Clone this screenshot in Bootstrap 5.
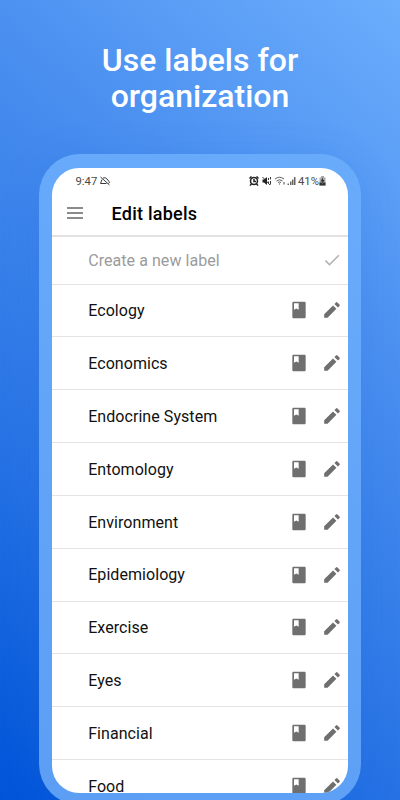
<!DOCTYPE html>
<html lang="en">
<head>
<meta charset="utf-8">
<meta name="viewport" content="width=device-width, initial-scale=1">
<title>Edit labels</title>
<link href="https://cdn.jsdelivr.net/npm/bootstrap@5.3.0/dist/css/bootstrap.min.css" rel="stylesheet">
<style>
body{font-family:Roboto,"Liberation Sans",sans-serif;height:800px;background:linear-gradient(221deg,#6baefd 0%,#4b90f0 32%,#2874e5 68%,#0054d8 100%);color:#111}
.promo{height:154px;padding-top:42px;font-size:32px;line-height:36px;font-weight:500;letter-spacing:0}
.phone{width:322px;height:651px;border-radius:41px;padding:13.5px 13px 12.5px;background:linear-gradient(200deg,#69abfb,#5b9ef4);box-shadow:0 4px 40px rgba(20,95,220,.13)}
.screen{height:625px;border-radius:27px}
.status{height:27px;padding:0 22px 0 23.500px;font-size:11.300px;line-height:27px;color:#4a4a4a}
.appbar{height:42px;padding:0 15px;border-bottom:2px solid #e2e2e2}
.appbar h1{font-size:18px;letter-spacing:.25px;margin-left:28.500px;padding-bottom:2px;color:#000}
.appbar svg{margin-bottom:4px}
.label-row{height:52.85px;padding:0 6.500px 0 36.200px;border-bottom:1.500px solid #e4e4e4;font-size:16px;letter-spacing:.06px;flex-shrink:0}
.label-row>span{padding-top:1.600px}
.label-row.new-label{height:48px;color:#9b9b9b}
.label-row svg{fill:#6f6f6f}
.label-row.new-label svg{fill:#b4b4b4}
.edit-icon{margin-left:13px}
.battery-level{margin-left:2px}
</style>
<script src="https://cdn.jsdelivr.net/npm/bootstrap@5.3.0/dist/js/bootstrap.bundle.min.js"></script>
</head>
<body class="overflow-hidden">
<svg class="d-none">
<symbol id="book" viewBox="0 0 24 24"><path d="M18.500 2h-13C4.600 2 4 2.600 4 3.500v17c0 .9.600 1.500 1.500 1.500h13c.9 0 1.500-.600 1.500-1.500v-17c0-.9-.600-1.500-1.500-1.500zM6 3.800h5.600v8l-2.800-1.700L6 11.800z"/></symbol>
<symbol id="pencil" viewBox="0 0 24 24"><path d="M2.600 17.100V21.200h4.100L17.300 10.600l-4.100-4.100zM21 7.100a1.200 1.200 0 0 0 0-1.700L18.500 2.900a1.200 1.200 0 0 0-1.700 0l-1.900 1.900 4.200 4.200z"/></symbol>
</svg>
<h2 class="promo text-white text-center mb-0">Use labels for<br>organization</h2>
<main class="phone mx-auto">
<div class="screen bg-white overflow-hidden d-flex flex-column">
<div class="status d-flex align-items-center flex-shrink-0">
<span>9:47</span>
<svg style="margin-left:3px" width="10" height="10" viewBox="0 0 20 20" fill="none" stroke="#333" stroke-width="1.900"><path d="M1 2l18 16M6 4q5-2 8 2l4 5q2 3-1 4M4 7L1 15h12"/></svg>
<span class="ms-auto d-flex align-items-center">
<svg width="10" height="10" viewBox="0 0 20 20" fill="none" stroke="#222" stroke-width="3"><circle cx="10" cy="10" r="7"/><path d="M10 6v5h4M1 5l4-4M19 5l-4-4M5 16l-3 3M15 16l3 3"/></svg>
<svg style="margin-left:3px" width="9" height="10" viewBox="0 0 18 20" fill="#222"><path d="M1 7h3l6-5v16l-6-5H1z"/><path d="M1 2l15 16M13 4v4M13 11v3M17 2v5M17 10v7" stroke="#222" stroke-width="1.800"/></svg>
<svg style="margin-left:3px" width="12" height="10" viewBox="0 0 22 20" fill="none" stroke="#444" stroke-width="1.700"><path d="M1 6q9-7 18 0M4 10q6-5 12 0M7 13q3-2 6 0"/><path d="M10 15v2M19 12v5" stroke-width="2"/></svg>
<svg width="10" height="10" viewBox="0 0 20 20" fill="#666"><path d="M3 15h3v3H3zM8 11h3v7H8zM12 7h3v11h-3zM16 2h3v16h-3z"/></svg>
<span class="battery-level">41%</span>
<svg width="7" height="10" viewBox="0 0 14 20" fill="#333"><path d="M4 0h6v3h3v16H1V3h3z" fill="#aaa"/><path d="M1 13h12v6H1zM8 3L3 11h3v5l5-8H8z"/></svg>
</span>
</div>
<header class="appbar d-flex align-items-center flex-shrink-0">
<svg width="16" height="12" viewBox="0 0 16 12" stroke="#666" stroke-width="1.500"><path d="M0 1h16M0 6h16M0 11h16"/></svg>
<h1 class="fw-medium mb-0">Edit labels</h1>
</header>
<div class="label-row new-label d-flex align-items-center"><span>Create a new label</span><svg class="ms-auto" width="20" height="20" viewBox="0 0 24 24"><path d="M9 16.170L4.830 12l-1.420 1.410L9 19 21 7l-1.410-1.410z"/></svg></div>
<div id="labels"></div>
</div>
</main>
<script>
document.getElementById('labels').innerHTML = ['Ecology','Economics','Endocrine System','Entomology','Environment','Epidemiology','Exercise','Eyes','Financial','Food'].map(name =>
`<div class="label-row d-flex align-items-center"><span>${name}</span><svg class="ms-auto" width="20" height="20"><use href="#book"/></svg><svg class="edit-icon" width="20" height="20"><use href="#pencil"/></svg></div>`).join('');
</script>
</body>
</html>
